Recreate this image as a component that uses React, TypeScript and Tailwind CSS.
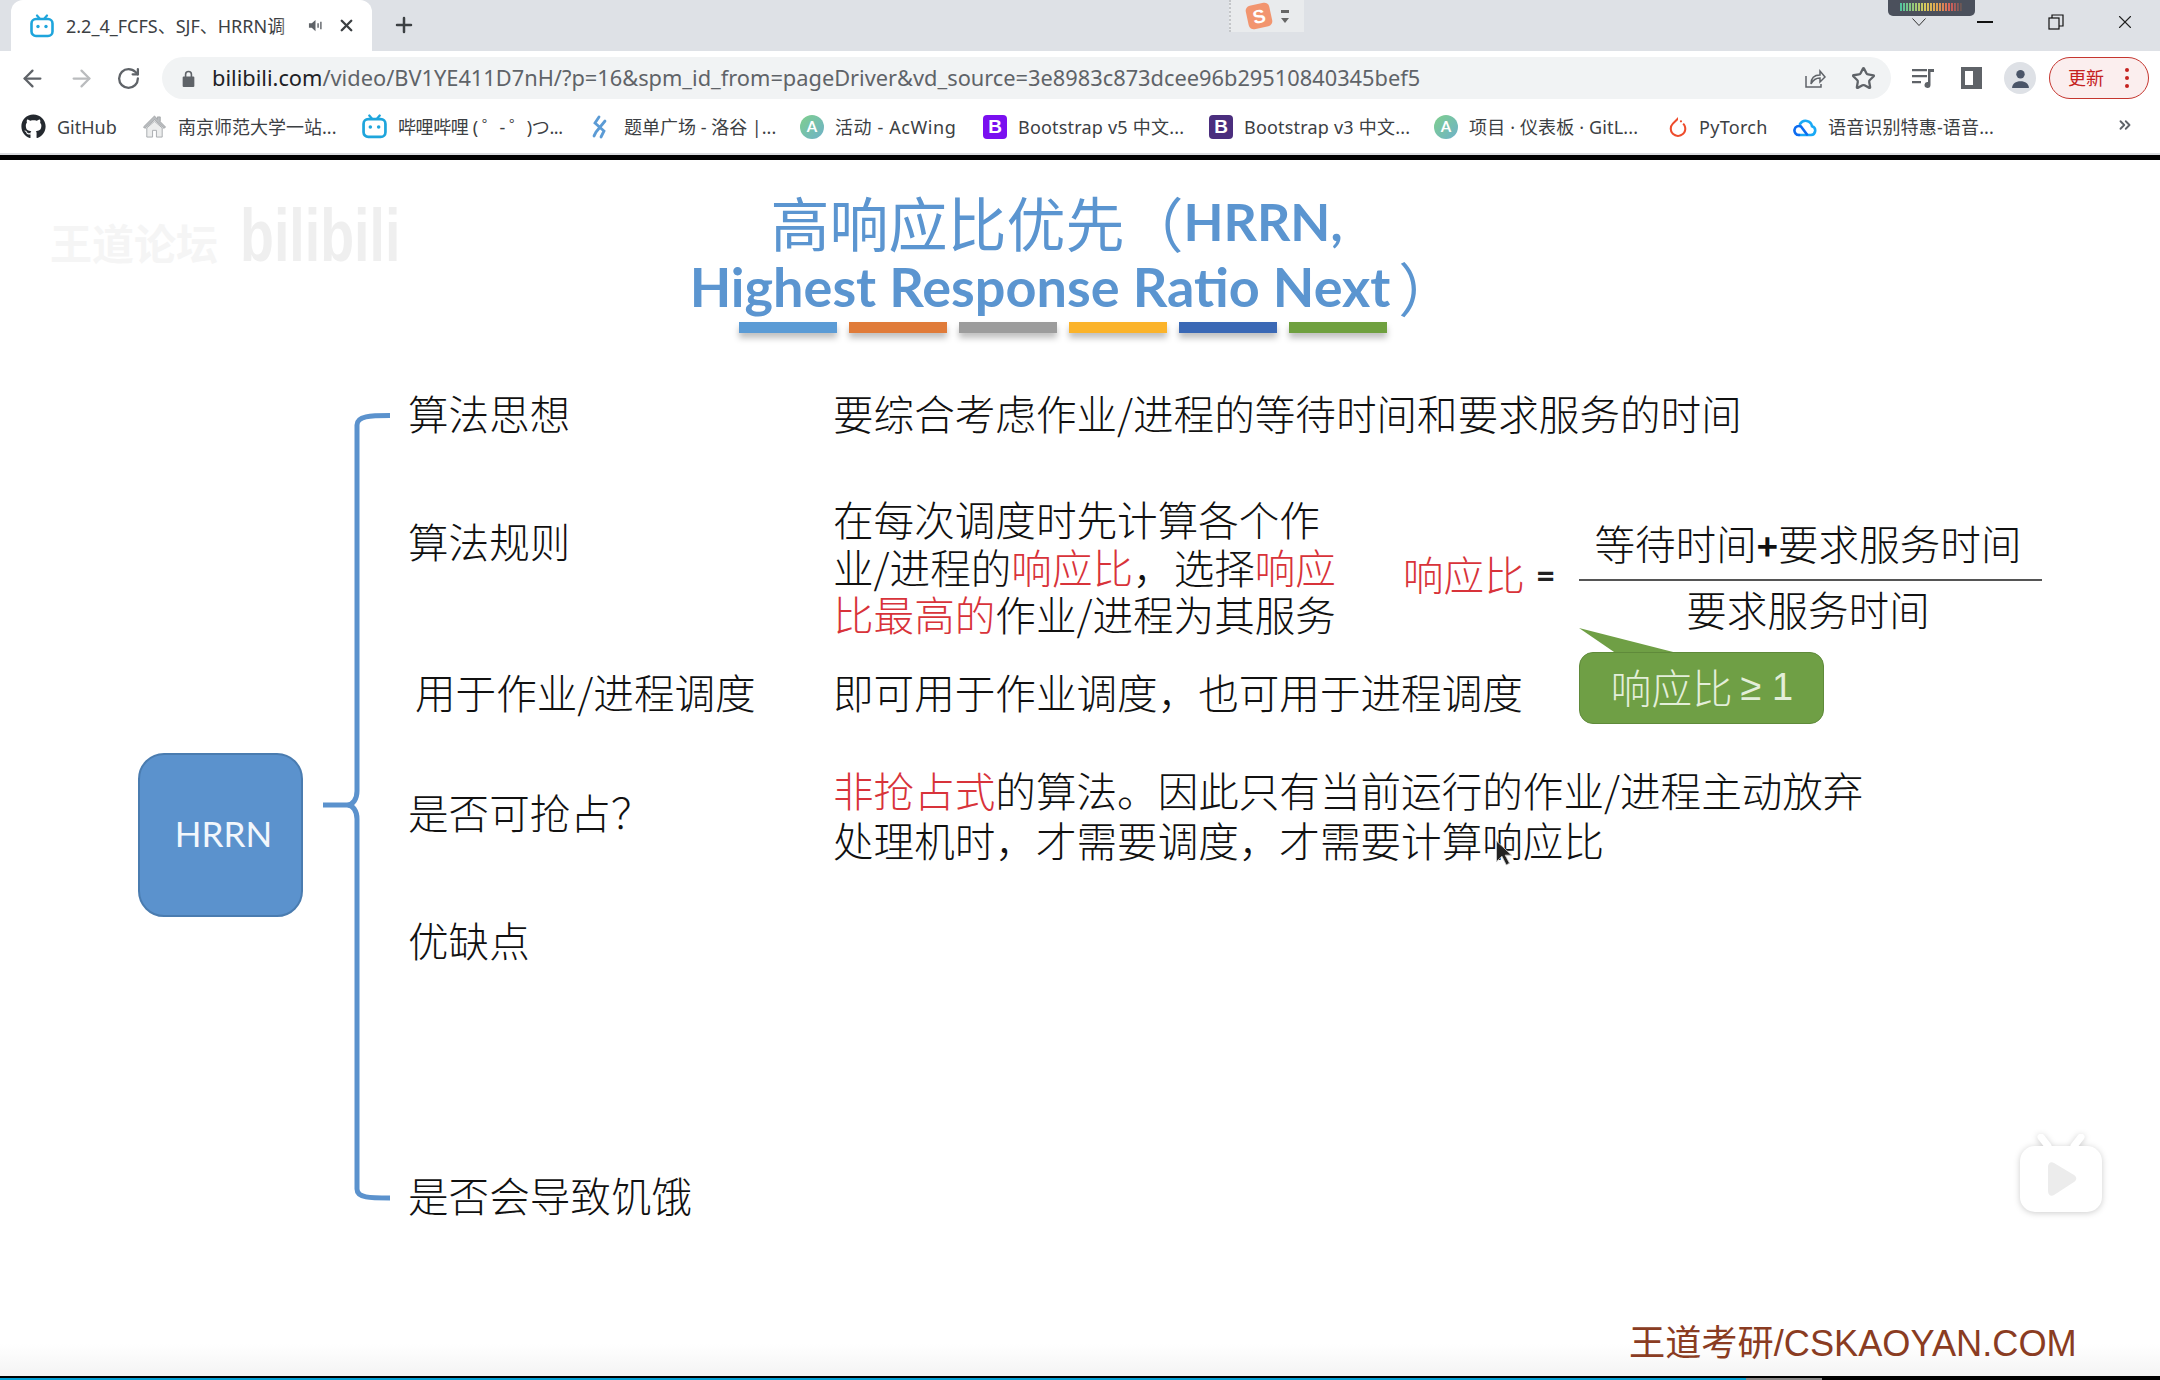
import { ArrowLeft, ArrowRight, RotateCw, Star, X, Plus, ChevronsRight } from 'lucide-react';
import { FaGithub } from 'react-icons/fa';
import { SiPytorch } from 'react-icons/si';

const uiFont = "font-['Noto_Sans','Noto_Sans_CJK_SC',sans-serif]";
const slideFont = "font-['Noto_Sans_CJK_SC','Noto_Sans',sans-serif]";

function BiliIcon({ className }: { className?: string }) {
  return (
    <svg viewBox="0 0 24 24" className={className} fill="none">
      <path d="M7 1.5 10 5M17 1.5 14 5" stroke="#1ea5dc" strokeWidth="2.2" strokeLinecap="round" />
      <rect x="1.5" y="5" width="21" height="17" rx="4.5" stroke="#1ea5dc" strokeWidth="2.6" fill="#fff" />
      <circle cx="8" cy="12.5" r="1.7" fill="#1ea5dc" />
      <circle cx="16" cy="12.5" r="1.7" fill="#1ea5dc" />
    </svg>
  );
}

function HouseIcon() {
  return (
    <svg viewBox="0 0 26 26" className="h-[25px] w-[25px]">
      <path d="M13 2 1.5 13.5l1.5 1.5L13 6l10 9 1.5-1.5L19 8V3h-3v2.5z" fill="#b9bcbf" stroke="#9a9da0" strokeWidth="0.8" />
      <path d="M5 14.5V24h6v-7h4v7h6v-9.5L13 7.5z" fill="#eceded" stroke="#a9acaf" strokeWidth="1" />
    </svg>
  );
}

function LuoguIcon() {
  return (
    <svg viewBox="0 0 16 24" className="h-[24px] w-[16px]" fill="none" stroke="#5b9bd5" strokeWidth="2.8" strokeLinecap="round">
      <path d="M7 2 3 8l9 8-3 6" />
      <path d="M13 6 4 17l-2 4" />
    </svg>
  );
}

function AcwingIcon() {
  return (
    <div className="flex h-[24px] w-[24px] items-center justify-center rounded-full bg-gradient-to-br from-[#7fcf8a] to-[#6fb0c8] font-['Lato',sans-serif] text-[15px] font-bold leading-none text-white">
      A
    </div>
  );
}

function BootIcon({ color }: { color: string }) {
  return (
    <div className={`flex h-[24px] w-[24px] items-center justify-center rounded-[4px] font-['Liberation_Sans',sans-serif] text-[19px] font-bold leading-none text-white ${color}`}>
      B
    </div>
  );
}

function CloudIcon() {
  return (
    <svg viewBox="0 0 24 20" className="h-[22px] w-[24px]" fill="none" strokeWidth="2.6" strokeLinecap="round">
      <path d="M6 18h12a4.5 4.5 0 0 0 1-8.8A6.5 6.5 0 0 0 7 7" stroke="#19a9f5" />
      <path d="M6 18a4.5 4.5 0 1 1 2-8.5l6 8" stroke="#0c6cf0" />
    </svg>
  );
}

const bookmarks = [
  { icon: <FaGithub className="h-[25px] w-[25px] text-[#24292f]" />, label: 'GitHub', iconBox: 'w-[25px]', box: 'w-[121px]', text: '' },
  { icon: <HouseIcon />, label: '南京师范大学一站...', iconBox: 'w-[25px]', box: 'w-[220px]', text: '' },
  { icon: <BiliIcon className="h-[25px] w-[25px]" />, label: '哔哩哔哩 ( ゜- ゜)つ...', iconBox: 'w-[25px]', box: 'w-[230px]', text: 'tracking-[-0.4px]' },
  { icon: <LuoguIcon />, label: '题单广场 - 洛谷 |...', iconBox: 'w-[21px]', box: 'w-[208px]', text: '' },
  { icon: <AcwingIcon />, label: '活动 - AcWing', iconBox: 'w-[24px]', box: 'w-[183px]', text: 'tracking-[0.6px]' },
  { icon: <BootIcon color="bg-[#7a0ff0]" />, label: 'Bootstrap v5 中文...', iconBox: 'w-[24px]', box: 'w-[226px]', text: 'tracking-[0.2px]' },
  { icon: <BootIcon color="bg-[#4b2e7e]" />, label: 'Bootstrap v3 中文...', iconBox: 'w-[24px]', box: 'w-[225px]', text: 'tracking-[0.2px]' },
  { icon: <AcwingIcon />, label: '项目 · 仪表板 · GitL...', iconBox: 'w-[24px]', box: 'w-[234px]', text: 'tracking-[0.15px]' },
  { icon: <SiPytorch className="h-[24px] w-[20px] text-[#ee4c2c]" />, label: 'PyTorch', iconBox: 'w-[20px]', box: 'w-[125px]', text: 'tracking-[0.3px]' },
  { icon: <CloudIcon />, label: '语音识别特惠-语音...', iconBox: 'w-[24px]', box: 'w-[300px]', text: 'tracking-[0.15px]' },
];

const barColors = ['bg-[#5b9bd5]', 'bg-[#e07b39]', 'bg-[#9c9c9c]', 'bg-[#fbb32a]', 'bg-[#3a68b5]', 'bg-[#6fa03f]'];

function TabStrip() {
  return (
    <div className="relative flex h-[51px] items-end bg-[#dee1e6] pl-[11px]">
      <div className="flex h-[51px] w-[361px] items-center rounded-t-[12px] bg-white pl-[19px]">
        <BiliIcon className="h-[24px] w-[24px]" />
        <div className="relative ml-[12px] w-[231px] overflow-hidden whitespace-nowrap text-[18px] leading-[28px] text-[#3c4043]">
          2.2_4_FCFS、SJF、HRRN调
          <div className="absolute inset-y-0 right-0 w-[18px] bg-gradient-to-r from-transparent to-white" />
        </div>
        <svg viewBox="0 0 16 16" className="ml-[11px] h-[15px] w-[15px]" fill="#5f6368">
          <path d="M1 5.5h3L8 2v12L4 10.5H1z" />
          <path d="M10 5.5v5h1.5v-5zM13 4v8h1.5V4z" />
        </svg>
        <X className="ml-[14px] h-[19px] w-[19px] text-[#3c4043]" strokeWidth={3} />
      </div>
      <Plus className="mb-[14px] ml-[20px] h-[24px] w-[24px] text-[#3c4043]" strokeWidth={2.5} />

      <div className="absolute left-[1229px] top-0 flex h-[32px] w-[75px] items-center border-l-2 border-dotted border-[#c4c6c9] bg-[#e9ebed] pl-[16px]">
        <div className="flex h-[24px] w-[24px] -rotate-12 items-center justify-center rounded-[5px] bg-[#f2956f] font-['Liberation_Sans',sans-serif] text-[19px] font-bold leading-none text-white">
          S
        </div>
        <div className="ml-[10px] flex flex-col items-center gap-[5px]">
          <div className="h-[3px] w-[8px] bg-[#666]" />
          <div className="h-0 w-0 border-x-[4px] border-t-[5px] border-x-transparent border-t-[#666]" />
        </div>
      </div>

      <div className="absolute left-[1888px] top-0 flex h-[16px] w-[87px] items-start justify-center rounded-b-[5px] bg-[#4b505c] pt-[3px]">
        <div className="h-[8px] w-[63px] bg-[repeating-linear-gradient(90deg,transparent_0,transparent_2px,#4b505c_2px,#4b505c_3px),linear-gradient(90deg,#4fc3a1,#8fc97c,#d8c95a,#e0a050,#d9605a,#555)]" />
      </div>
      <svg viewBox="0 0 14 8" className="absolute left-[1912px] top-[18px] h-[8px] w-[14px]" fill="none" stroke="#333" strokeWidth="1">
        <path d="M0.5 0.5 7 7.5l6.5-7" />
      </svg>

      <div className="absolute right-[24px] top-[11px] flex items-center">
        <div className="h-[1.5px] w-[16px] bg-[#111]" />
        <svg viewBox="0 0 16 16" className="ml-[55px] h-[16px] w-[16px]" fill="none" stroke="#111" strokeWidth="1.2">
          <rect x="1" y="4" width="10" height="11" />
          <path d="M4 4V1h11v11h-4" />
        </svg>
        <X className="ml-[50px] h-[22px] w-[22px] text-[#222]" strokeWidth={1.2} />
      </div>
    </div>
  );
}

function Toolbar() {
  return (
    <div className="flex h-[51px] items-center bg-white pt-[3px]">
      <ArrowLeft className="ml-[19px] h-[27px] w-[27px] text-[#5f6368]" strokeWidth={2} />
      <ArrowRight className="ml-[22px] h-[27px] w-[27px] text-[#babcbe]" strokeWidth={2} />
      <RotateCw className="ml-[21px] h-[25px] w-[25px] text-[#5f6368]" strokeWidth={2.2} />
      <div className="ml-[21px] flex h-[42px] w-[1729px] items-center rounded-full bg-[#f1f3f4] pl-[20px]">
        <svg viewBox="0 0 12 16" className="h-[17px] w-[13px]" fill="#5f6368">
          <path d="M2.5 6V4.2a3.5 3.5 0 0 1 7 0V6h1a1 1 0 0 1 1 1v8a1 1 0 0 1-1 1h-9a1 1 0 0 1-1-1V7a1 1 0 0 1 1-1zm1.5 0h4V4.2a2 2 0 0 0-4 0z" />
        </svg>
        <div className="ml-[17px] whitespace-nowrap text-[21.8px] leading-none text-[#5f6368]">
          <span className="text-[#202124]">bilibili.com</span>
          /video/BV1YE411D7nH/?p=16&amp;spm_id_from=pageDriver&amp;vd_source=3e8983c873dcee96b29510840345bef5
        </div>
        <svg viewBox="0 0 24 24" className="ml-auto mr-[1px] h-[24px] w-[24px]" fill="none" stroke="#5f6368" strokeWidth="1.5">
          <path d="M4 10v11h15v-3" />
          <path d="M9 18c0-6 3-9 9-9V5l5 6-5 5v-4c-4 0-7 2-9 6z" />
        </svg>
        <Star className="ml-[24px] mr-[15px] h-[25px] w-[25px] text-[#5f6368]" strokeWidth={2.2} />
      </div>
      <svg viewBox="0 0 24 24" className="ml-[20px] h-[24px] w-[24px]" fill="#5f6368">
        <path d="M1 3h15v2.2H1zM1 9h15v2.2H1zM1 15h9v2.2H1z" />
        <path d="M17 3h6v3h-3.5v13a3 3 0 1 1-2.5-3z" />
      </svg>
      <div className="ml-[26px] h-[22px] w-[21px] border-[4px] border-r-[9px] border-[#5f6368]" />
      <div className="ml-[22px] flex h-[32px] w-[32px] items-center justify-center rounded-full bg-[#dee1e6]">
        <svg viewBox="0 0 20 20" className="h-[21px] w-[21px]" fill="#4a5568">
          <circle cx="10" cy="6" r="4" />
          <path d="M2 19c0-4 3.5-6.5 8-6.5s8 2.5 8 6.5z" />
        </svg>
      </div>
      <div className="ml-[13px] flex h-[42px] w-[100px] items-center rounded-full border-[1.5px] border-[#c5362f] bg-[#fbeeee] pl-[18px]">
        <span className="text-[18px] leading-none text-[#c5221f]">更新</span>
        <div className="ml-[21px] flex flex-col gap-[4px]">
          <div className="h-[4px] w-[4px] rounded-full bg-[#c5221f]" />
          <div className="h-[4px] w-[4px] rounded-full bg-[#c5221f]" />
          <div className="h-[4px] w-[4px] rounded-full bg-[#c5221f]" />
        </div>
      </div>
    </div>
  );
}

function BookmarkBar() {
  return (
    <div className="relative flex h-[51px] items-center bg-white pb-[2px] pl-[21px]">
      {bookmarks.map((b) => (
        <div key={b.label} className={`flex shrink-0 items-center ${b.box}`}>
          <div className={`flex shrink-0 ${b.iconBox}`}>{b.icon}</div>
          <span className={`ml-[11px] whitespace-nowrap text-[18px] leading-none text-[#3c4043] ${b.text}`}>{b.label}</span>
        </div>
      ))}
      <ChevronsRight className="absolute left-[2116px] top-[14px] h-[18px] w-[18px] text-[#5f6368]" strokeWidth={2.5} />
    </div>
  );
}

function Title() {
  return (
    <div className="flex w-[2110px] flex-col items-center pt-[28px] text-[#5b95d0]">
      <div className="ml-[3px] flex h-[66px] items-center whitespace-nowrap text-[59px] leading-none font-normal">
        高响应比优先（<span className="font-['Lato',sans-serif] text-[52px] font-bold">HRRN,</span>
      </div>
      <div className="flex h-[66px] items-center whitespace-nowrap font-['Lato',sans-serif] text-[54px] leading-none font-bold">
        Highest Response Ratio Next
        <span className={`${slideFont} ml-[8px] inline-block w-[22px] text-[58px] font-normal`}>）</span>
      </div>
      <div className="ml-[15px] mt-[2px] flex gap-[12px]">
        {barColors.map((c) => (
          <div key={c} className={`h-[11px] w-[98px] shadow-[0_5px_6px_rgba(0,0,0,0.25)] ${c}`} />
        ))}
      </div>
    </div>
  );
}

function Brace() {
  return (
    <svg viewBox="0 0 72 790" className="ml-[17px] mt-[24px] h-[790px] w-[72px] shrink-0" fill="none" stroke="#5b92cd" strokeWidth="5">
      <path d="M70 2.5C50 2.5 37 3 37 12V378c0 8-4 14-10 14H3M27 392c6 0 10 6 10 14V776c0 9 13 9 33 9" />
    </svg>
  );
}

function Formula() {
  return (
    <div className="ml-[29px] flex items-start pt-[15px]">
      <span className="mt-[34px] leading-[60px] text-[#d8333a]">响应比</span>
      <span className="ml-[11px] mt-[35px] font-['Lato',sans-serif] text-[34px] leading-[60px] font-bold text-[#222]">=</span>
      <div className="relative ml-[24px] flex w-[463px] flex-col items-center">
        <div className="mb-[3px] h-[66px] pr-[6px] leading-[66px]">等待时间<span className="text-[36px] font-bold">+</span>要求服务时间</div>
        <div className="h-[2px] w-full bg-[#555]" />
        <div className="mt-[3px] h-[50px] pr-[6px] leading-[50px]">要求服务时间</div>
        <div className="absolute left-0 top-[118px] h-[96px] w-[245px]">
          <svg viewBox="0 0 104 26" className="absolute left-0 top-0 h-[26px] w-[104px]">
            <path d="M0 0 38 26H102z" fill="#6f9f45" />
          </svg>
          <div className="absolute inset-x-0 bottom-0 flex h-[72px] items-center justify-center rounded-[14px] border border-[#5f8a3a] bg-[#6f9f45] pb-[2px] text-[#e3eed9]">
            响应比<span className="ml-[8px] font-['Liberation_Sans',sans-serif] text-[38px]">≥ 1</span>
          </div>
        </div>
      </div>
    </div>
  );
}

function Rows() {
  return (
    <div className="ml-[16px] -mt-px flex flex-col text-[40.6px] font-light text-[#111]">
      <div className="flex h-[50px] items-center whitespace-nowrap">
        <div className="w-[425px]">算法思想</div>
        <div>要综合考虑作业/进程的等待时间和要求服务的时间</div>
      </div>
      <div className="mt-[57px] flex h-[143px] whitespace-nowrap">
        <div className="mt-[21px] w-[425px] leading-[50px]">算法规则</div>
        <div className="w-[541px] leading-[47.5px]">
          <div>在每次调度时先计算各个作</div>
          <div>业/进程的<span className="text-[#d8333a]">响应比</span>，选择<span className="text-[#d8333a]">响应</span></div>
          <div><span className="text-[#d8333a]">比最高的</span>作业/进程为其服务</div>
        </div>
        <Formula />
      </div>
      <div className="mt-[29px] flex h-[50px] items-center whitespace-nowrap">
        <div className="w-[425px] pl-[7px]">用于作业/进程调度</div>
        <div>即可用于作业调度，也可用于进程调度</div>
      </div>
      <div className="mt-[48px] flex h-[100px] whitespace-nowrap">
        <div className="mt-[22px] w-[425px] leading-[50px]">是否可抢占？</div>
        <div className="leading-[50px]">
          <div><span className="text-[#d8333a]">非抢占式</span>的算法。因此只有当前运行的作业/进程主动放弃</div>
          <div>处理机时，才需要调度，才需要计算响应比</div>
        </div>
      </div>
      <div className="mt-[50px] h-[50px] leading-[50px]">优缺点</div>
      <div className="mt-[205px] h-[50px] leading-[50px]">是否会导致饥饿</div>
    </div>
  );
}

function Overlays() {
  return (
    <>
      <div className="absolute left-[50px] top-[60px] whitespace-nowrap text-[42px] font-bold leading-[44px] text-[#f5f5f5]">王道论坛</div>
      <div className="absolute left-[240px] top-[36px] origin-left scale-x-[0.75] whitespace-nowrap font-['Liberation_Sans',sans-serif] text-[74px] font-bold leading-[80px] text-[#efefef]">bilibili</div>

      <svg viewBox="0 0 16 24" className="absolute left-[1494px] top-[680px] h-[26px] w-[18px]">
        <path d="M2 1v19l5-5 4 8 3-1.5-4-7.5h6z" fill="#222" stroke="#ccc" strokeWidth="0.8" />
      </svg>

      <svg viewBox="0 0 84 80" className="absolute left-[2019px] top-[974px] h-[80px] w-[84px] drop-shadow-[0_1px_3px_rgba(0,0,0,0.2)]">
        <path d="M29 12 22 3M55 12l7-9" stroke="#fff" strokeWidth="7" strokeLinecap="round" />
        <rect x="1" y="12" width="82" height="66" rx="15" fill="#fff" />
        <path d="M29 33c0-4 3-6 6-4l20 12c3 2 3 5 0 7L35 61c-3 2-6 0-6-4z" fill="#ececec" />
      </svg>

      <div className="absolute left-[1629px] top-[1161px] whitespace-nowrap font-['Liberation_Sans','Noto_Sans_CJK_SC',sans-serif] text-[36.2px] leading-[46px] text-[#8a3c22]">
        王道考研/CSKAOYAN.COM
      </div>
    </>
  );
}

export default function App() {
  return (
    <div lang="zh-CN" className={`flex h-[1380px] w-[2160px] flex-col overflow-hidden bg-white ${uiFont}`}>
      <TabStrip />
      <Toolbar />
      <BookmarkBar />
      <div className="h-[2px] bg-[#dadce0]" />
      <div className="h-[5px] bg-black" />
      <div className={`relative flex-1 overflow-hidden bg-white ${slideFont}`}>
        <div className="absolute inset-x-0 bottom-[4px] h-[32px] bg-gradient-to-b from-white to-[#f4f4f4]" />
        <Title />
        <div className="mt-[56px] flex">
          <div className="ml-[138px] mt-[364px] flex h-[164px] w-[165px] shrink-0 items-center justify-center rounded-[26px] border-2 border-[#4a7cb0] bg-[#5b92cd] pb-[3px] pl-[6px] font-['Lato',sans-serif] text-[35px] text-[#f2f7fc]">
            HRRN
          </div>
          <Brace />
          <Rows />
        </div>
        <Overlays />
        <div className="absolute inset-x-0 bottom-0 flex h-[4px] bg-black">
          <div className="mt-[2px] h-[2px] w-[1746px] bg-[#00a1d6]" />
          <div className="mt-[2px] h-[2px] w-[76px] bg-[#888]" />
        </div>
      </div>
    </div>
  );
}
